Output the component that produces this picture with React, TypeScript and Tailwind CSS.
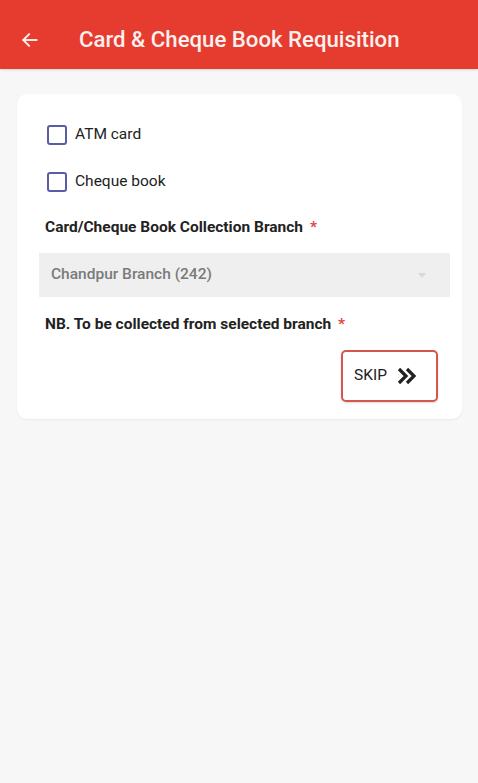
import React, { useState } from 'react';

const font = { fontFamily: 'Roboto, "Liberation Sans", sans-serif' };

const App: React.FC = () => {
  const [atm, setAtm] = useState(false);
  const [cheque, setCheque] = useState(false);

  return (
    <div className="min-h-[783px] w-full bg-[#f7f7f7]" style={font}>
      {/* Header */}
      <div className="flex h-[69px] items-center bg-[#e53c2f] px-[20px] pt-[10px] shadow-sm">
        <svg width="20" height="20" viewBox="0 0 24 24" fill="none" stroke="#fbe9e7" strokeWidth="2.4" strokeLinecap="round" strokeLinejoin="round">
          <path d="M20 12H4" />
          <path d="M11 5l-7 7 7 7" />
        </svg>
        <h1 className="ml-[39px] text-[22.2px] font-medium text-[#fdf0ee]">Card &amp; Cheque Book Requisition</h1>
      </div>

      {/* Card */}
      <div className="ml-[17px] mr-[16px] mt-[25px] rounded-[10px] bg-white pl-[22px] pr-[22px] pb-[17px] pt-[24px] shadow-[0_1px_2px_rgba(0,0,0,0.06)]">
        <label className="flex h-[34px] items-center gap-[8px]" onClick={() => setAtm(!atm)}>
          <span className={`ml-[8px] h-[20px] w-[20px] rounded-[3px] border-2 border-[#5a5da6] ${atm ? 'bg-[#5a5da6]' : ''}`} />
          <span className="text-[15.5px] text-[#222]">ATM card</span>
        </label>
        <label className="mt-[13px] flex h-[34px] items-center gap-[8px]" onClick={() => setCheque(!cheque)}>
          <span className={`ml-[8px] h-[20px] w-[20px] rounded-[3px] border-2 border-[#5a5da6] ${cheque ? 'bg-[#5a5da6]' : ''}`} />
          <span className="text-[15.5px] text-[#222]">Cheque book</span>
        </label>

        <p className="mt-[17px] ml-[6px] text-[15.5px] font-bold leading-[22px] text-[#222]">
          Card/Cheque Book Collection Branch <span className="ml-[3px] text-[#e0463c]">*</span>
        </p>

        <div className="-mr-[10px] mt-[15px] flex h-[44px] items-center justify-between bg-[#efefef] pl-[12px] pr-[24px]">
          <span className="text-[15.5px] font-medium text-[#7a7a7a]">Chandpur Branch (242)</span>
          <svg width="8" height="5" viewBox="0 0 8 5"><path d="M0 0h8L4 5z" fill="#d8d8d8" /></svg>
        </div>

        <p className="mt-[16px] ml-[6px] text-[15.5px] font-bold leading-[22px] text-[#222]">
          NB. To be collected from selected branch <span className="ml-[3px] text-[#e0463c]">*</span>
        </p>

        <div className="mt-[15px] flex justify-end pr-[2px]">
          <button className="flex h-[52px] w-[97px] items-center gap-[10px] rounded-[5px] border-2 border-[#d6564d] pl-[11px] shadow-[0_1px_2px_rgba(0,0,0,0.15)]">
            <span className="text-[15.5px] text-[#222]">SKIP</span>
            <svg width="20" height="18" viewBox="0 0 20 18" fill="none" stroke="#222" strokeWidth="3.2" strokeLinejoin="miter">
              <path d="M2 2l7 7-7 7" />
              <path d="M10 2l7 7-7 7" />
            </svg>
          </button>
        </div>
      </div>
    </div>
  );
};

export default App;
